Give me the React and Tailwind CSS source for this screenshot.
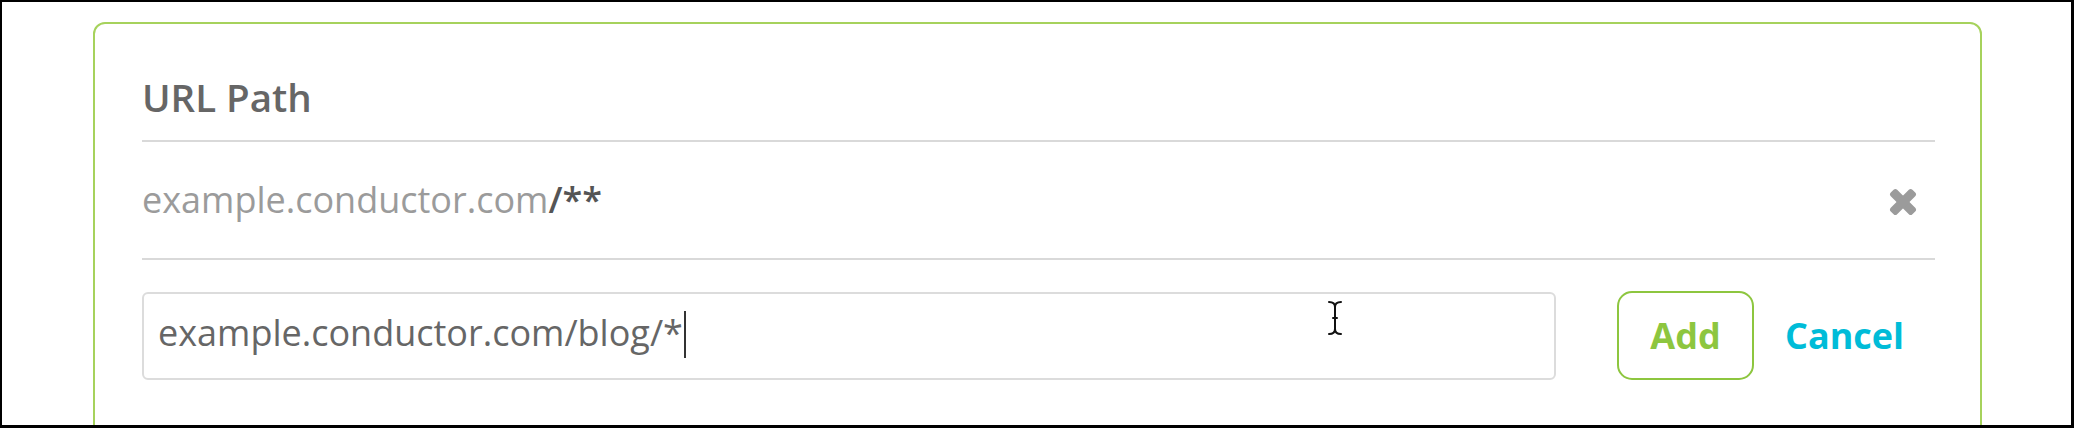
import React from "react";

function IBeam() {
  return (
    <svg
      className="absolute left-[1325px] top-[298px]"
      width="16"
      height="36"
      viewBox="0 0 16 36"
      fill="none"
      stroke="#111"
      strokeWidth="2"
      strokeLinecap="round"
    >
      <path d="M2 2 C5 2 8 3 8 7 C8 3 11 2 14 2" />
      <path d="M8 7 V29" />
      <path d="M6 18 H10" />
      <path d="M2 34 C5 34 8 33 8 29 C8 33 11 34 14 34" />
    </svg>
  );
}

function CloseIcon() {
  return (
    <svg width="28" height="28" viewBox="0 0 28 28" className="mt-[4px]" fill="#9b9b9b">
      <rect x="-1.3" y="9.5" width="30.6" height="9" rx="2.5" transform="rotate(45 14 14)" />
      <rect x="-1.3" y="9.5" width="30.6" height="9" rx="2.5" transform="rotate(-45 14 14)" />
    </svg>
  );
}

export default function App() {
  return (
    <div
      className="relative w-[2074px] h-[428px] overflow-hidden bg-white border-t-2 border-l-2 border-r-[3px] border-b-[3px] border-black"
      style={{ fontFamily: '"Open Sans", "Noto Sans", sans-serif' }}
    >
      <div className="ml-[91px] mt-[20px] w-[1889px] h-[520px] border-2 border-[#a6d25c] rounded-[12px] pl-[47px] pr-[45px] pt-[54px]">
        <div className="border-b-2 border-[#d9d9d9] pb-[24px]">
          <h2 className="text-[38.5px] leading-[38px] font-semibold text-[#666666]">URL Path</h2>
        </div>
        <div className="flex items-center justify-between h-[118px] border-b-2 border-[#d9d9d9] pr-[18px]">
          <div className="text-[36px] leading-[36px]">
            <span className="text-[#9b9b9b]">example.conductor.com</span>
            <span className="text-[#555555] font-semibold">/**</span>
          </div>
          <CloseIcon />
        </div>
        <div className="flex items-center mt-[31px]">
          <div className="flex items-center w-[1414px] h-[88px] border-2 border-[#dcdcdc] rounded-[6px] pl-[14px]">
            <span className="text-[36px] leading-[36px] text-[#666666] mb-[6px]">example.conductor.com/blog/*</span>
            <span className="w-[2px] h-[47px] bg-[#333333] ml-[1px] mb-[3px]" />
          </div>
          <button className="ml-[61px] w-[137px] h-[89px] border-2 border-[#8dc63f] rounded-[15px] text-[36px] font-bold text-[#8dc63f]">
            Add
          </button>
          <button className="ml-[31px] text-[36px] font-bold text-[#00bcd8]">Cancel</button>
        </div>
      </div>
      <IBeam />
    </div>
  );
}
